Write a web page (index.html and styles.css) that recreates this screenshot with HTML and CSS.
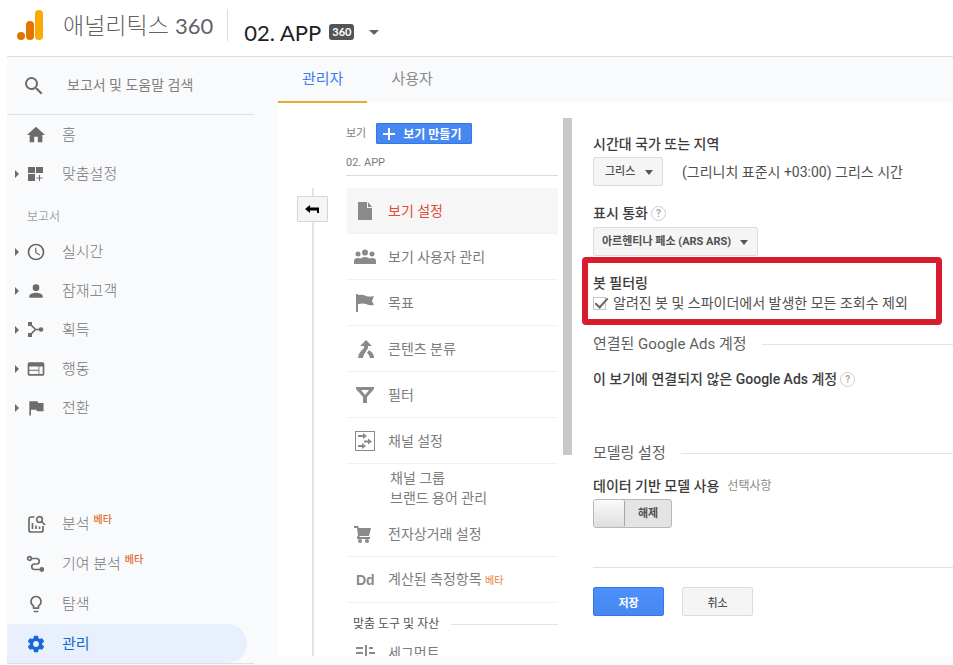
FILE: index.html
```html
<!DOCTYPE html>
<html lang="ko">
<head>
    <meta charset="UTF-8">
    <meta name="viewport" content="width=device-width, initial-scale=1.0">
    <title>애널리틱스 360</title>
    <link rel="stylesheet" href="styles.css">
</head>
<body>
    <header class="header">
      <svg class="logo" viewBox="0 0 26 30">
        <rect x="18" y="0" width="8" height="30" rx="4" fill="#f9ab00"/>
        <rect x="9" y="11" width="8" height="19" rx="4" fill="#e37400"/>
        <circle cx="4" cy="26" r="4" fill="#e37400"/>
      </svg>
      <h1 class="brand">애널리틱스 <span>360</span></h1>
      <button class="account" type="button">
        02. APP
        <span class="badge">360</span>
        <svg class="account-caret" viewBox="0 0 10 5"><path d="M0 0h10L5 5z"/></svg>
      </button>
    </header>

    <div class="page">
      <nav class="sidebar">
        <label class="search">
          <svg viewBox="0 0 24 24"><path d="M15.5 14h-.79l-.28-.27A6.47 6.47 0 0 0 16 9.500 6.500 6.500 0 1 0 9.500 16c1.610 0 3.090-.59 4.230-1.570l.27.28v.79l5 4.990L20.490 19l-4.990-5zm-6 0a4.500 4.500 0 1 1 0-9 4.500 4.500 0 0 1 0 9z"/></svg>
          <input type="text" placeholder="보고서 및 도움말 검색">
        </label>

        <a class="nav-item" href="#">
          <span class="caret-none"></span>
          <svg class="nav-icon" viewBox="1 1 22 22"><path d="M10 20v-6h4v6h5v-8h3L12 3 2 12h3v8z"/></svg>
          홈
        </a>
        <a class="nav-item" href="#">
          <svg class="caret" viewBox="0 0 4 8"><path d="M0 0l4 4-4 4z"/></svg>
          <svg class="nav-icon" viewBox="0 0 20 20"><path d="M2 3h7v6H2zM10 3h7v6h-7zM2 10h7v7H2zM13 11h1v2.500h2.500v1H14V17h-1v-2.500h-2.500v-1H13z"/></svg>
          맞춤설정
        </a>

        <h2 class="nav-title">보고서</h2>
        <a class="nav-item" href="#">
          <svg class="caret" viewBox="0 0 4 8"><path d="M0 0l4 4-4 4z"/></svg>
          <svg class="nav-icon" viewBox="0 0 24 24"><path d="M12 2a10 10 0 1 0 0 20 10 10 0 0 0 0-20zm0 18a8 8 0 1 1 0-16 8 8 0 0 1 0 16zm.5-13H11v6l5.200 3.200.8-1.300-4.500-2.700z"/></svg>
          실시간
        </a>
        <a class="nav-item" href="#">
          <svg class="caret" viewBox="0 0 4 8"><path d="M0 0l4 4-4 4z"/></svg>
          <svg class="nav-icon" viewBox="0 0 24 24"><path d="M12 12a4 4 0 1 0 0-8 4 4 0 0 0 0 8zm0 2c-2.700 0-8 1.300-8 4v2h16v-2c0-2.700-5.300-4-8-4z"/></svg>
          잠재고객
        </a>
        <a class="nav-item" href="#">
          <svg class="caret" viewBox="0 0 4 8"><path d="M0 0l4 4-4 4z"/></svg>
          <svg class="nav-icon" viewBox="0 0 20 20"><path d="M2 2h4v4H2zM2 13h4v4H2z"/><circle cx="15" cy="9.500" r="2.300"/><path d="M4 4l5.500 5.500L4 15M9 9.500h5" class="stroke"/></svg>
          획득
        </a>
        <a class="nav-item" href="#">
          <svg class="caret" viewBox="0 0 4 8"><path d="M0 0l4 4-4 4z"/></svg>
          <svg class="nav-icon" viewBox="0 0 24 24"><path d="M20 4H4a2 2 0 0 0-2 2v12c0 1.100.9 2 2 2h16a2 2 0 0 0 2-2V6a2 2 0 0 0-2-2zM15 18H4v-4h11zm0-5H4V9h11zm5 5h-4V9h4z"/></svg>
          행동
        </a>
        <a class="nav-item" href="#">
          <svg class="caret" viewBox="0 0 4 8"><path d="M0 0l4 4-4 4z"/></svg>
          <svg class="nav-icon" viewBox="0 0 24 24"><path d="M14.400 6L14 4H4v17h2v-7h6.600l.4 2h8V6z"/></svg>
          전환
        </a>

        <div class="nav-bottom">
          <a class="nav-item" href="#">
            <span class="caret-none"></span>
            <svg class="nav-icon" viewBox="0 0 20 20"><path class="stroke" d="M8.500 3H5Q3 3 3 5v11q0 2 2 2h10q2 0 2-2v-4M6.500 9v6M10 11.500V15M13.500 12.500V15M15.500 7.500L19 11"/><circle class="stroke" cx="13.500" cy="5.500" r="2.800"/></svg>
            <span>분석<sup>베타</sup></span>
          </a>
          <a class="nav-item" href="#">
            <span class="caret-none"></span>
            <svg class="nav-icon" viewBox="0 0 20 20"><path class="stroke" d="M5 4.500h5.500a2.700 2.700 0 0 1 0 5.500h-2a2.700 2.700 0 0 0 0 5.500H16"/><circle class="stroke" cx="3.500" cy="4.500" r="1.800"/><circle cx="15.800" cy="15.500" r="2.400"/></svg>
            <span>기여 분석<sup>베타</sup></span>
          </a>
          <a class="nav-item" href="#">
            <span class="caret-none"></span>
            <svg class="nav-icon" viewBox="0 0 24 24"><path d="M9 21c0 .55.45 1 1 1h4c.55 0 1-.45 1-1v-1H9zm3-19a7 7 0 0 0-4 12.740V17c0 .55.45 1 1 1h6c.55 0 1-.45 1-1v-2.260A7 7 0 0 0 12 2zm2.850 11.100l-.85.6V16h-4v-2.300l-.85-.6A5 5 0 1 1 17 9a5 5 0 0 1-2.150 4.100z"/></svg>
            탐색
          </a>
          <a class="nav-item active" href="#">
            <span class="caret-none"></span>
            <svg class="nav-icon" viewBox="0 0 24 24"><path d="M19.430 12.980c.04-.32.07-.64.07-.98s-.03-.66-.07-.98l2.110-1.650c.19-.15.24-.42.12-.64l-2-3.460c-.12-.22-.39-.3-.61-.22l-2.490 1c-.52-.4-1.080-.73-1.690-.98l-.38-2.650A.49.49 0 0 0 14 2h-4c-.25 0-.46.18-.49.42l-.38 2.650c-.61.25-1.170.59-1.690.98l-2.490-1c-.23-.09-.49 0-.61.22l-2 3.460c-.13.22-.07.49.12.64l2.110 1.650c-.04.32-.07.65-.07.98s.03.66.07.98l-2.110 1.650c-.19.15-.24.42-.12.64l2 3.460c.12.22.39.3.61.22l2.490-1c.52.4 1.080.73 1.690.98l.38 2.650c.03.24.24.42.49.42h4c.25 0 .46-.18.49-.42l.38-2.650c.61-.25 1.170-.59 1.690-.98l2.490 1c.23.09.49 0 .61-.22l2-3.460c.12-.22.07-.49-.12-.64zM12 15.500a3.500 3.500 0 1 1 0-7 3.500 3.500 0 0 1 0 7z"/></svg>
            관리
          </a>
        </div>
      </nav>

      <main class="main">
        <div class="tabs">
          <a class="tab selected" href="#">관리자</a>
          <a class="tab" href="#">사용자</a>
        </div>

        <div class="panel">
          <div class="rail">
            <button class="back" type="button" aria-label="뒤로">
              <svg viewBox="0 0 16 12"><path d="M0 6l5-4v2.500h9V10h-2V7.500H5V10z"/></svg>
            </button>
          </div>

          <div class="menu">
            <div class="menu-head">
              보기
              <button class="create" type="button">
                <svg viewBox="0 0 12 12"><path d="M5 0h2v5h5v2H7v5H5V7H0V5h5z"/></svg>
                보기 만들기
              </button>
            </div>
            <div class="view-name">02. APP</div>

            <a class="menu-item current" href="#">
              <svg viewBox="0 0 24 24"><path d="M5 3h9v6h5v12H5zM15 3l4 5h-4z"/></svg>
              보기 설정
            </a>
            <a class="menu-item" href="#">
              <svg viewBox="0 0 24 24"><circle cx="12" cy="7.500" r="3"/><circle cx="5" cy="9" r="2.500"/><circle cx="19" cy="9" r="2.500"/><path d="M1 19v-3q0-3 4-3 1.500 0 2.500.5Q9 12 12 12t4.500 1.500q1-.5 2.500-.5 4 0 4 3v3z"/></svg>
              보기 사용자 관리
            </a>
            <a class="menu-item" href="#">
              <svg viewBox="0 0 24 24"><path d="M3 3h2v1q5-1 8 1 3 1 8 0l-2 5 2 4q-5 1-8-1-3-1-8 0v8H3z"/></svg>
              목표
            </a>
            <a class="menu-item" href="#">
              <svg viewBox="0 0 24 24"><path d="M13 3l6 6h-4v2l-3 5q-2 2-2 5H5q0-4 3-7l3-3V9H7zM16 13q5 3 5 8h-4q0-3-3-5z"/></svg>
              콘텐츠 분류
            </a>
            <a class="menu-item" href="#">
              <svg viewBox="0 0 24 24"><path d="M3 4h18v2l-7 8v6h-4v-6L3 6zm5 3l4 5 4-5z"/></svg>
              필터
            </a>
            <a class="menu-item" href="#">
              <svg viewBox="0 0 24 24"><path d="M2 2h20v20H2zm1 1v18h18V3z" fill-rule="evenodd"/><path d="M5 6h5V4l4 3-4 3V8H5zM11 11.500h4v-2l4 3-4 3v-2h-4zM5 16h4v-2l4 3-4 3v-2H5z"/></svg>
              채널 설정
            </a>
            <div class="submenu">
              <a href="#">채널 그룹</a>
              <a href="#">브랜드 용어 관리</a>
            </div>
            <a class="menu-item" href="#">
              <svg viewBox="0 0 24 24"><path d="M1 4h4l1 2h12l-2 8H7l-1 1h11v2H4v-2l1-2L4 6H1z"/><circle cx="7" cy="19" r="2"/><circle cx="14" cy="19" r="2"/></svg>
              전자상거래 설정
            </a>
            <a class="menu-item" href="#">
              <span class="dd">Dd</span>
              <span>계산된 측정항목 <small>베타</small></span>
            </a>
            <h2 class="menu-title">맞춤 도구 및 자산</h2>
            <a class="menu-item short" href="#">
              <svg viewBox="0 0 24 24"><path d="M3 6h7v2H3zM3 11h7v2H3zM3 16h7v2H3zM12 4h2v16h-2zM16 6h4v2h-4zM16 11h6v2h-6zM16 16h6v2h-6z"/></svg>
              세그먼트
            </a>
          </div>

          <div class="scrollbar"></div>

          <form class="form">
            <label class="label" for="country">시간대 국가 또는 지역</label>
            <div class="row">
              <span class="select country">
                <select id="country"><option>그리스</option></select>
              </span>
              <span>(그리니치 표준시 +03:00) 그리스 시간</span>
            </div>

            <div class="label currency-label">
              <label for="currency">표시 통화</label>
              <button class="help" type="button">?</button>
            </div>
            <span class="select currency">
              <select id="currency"><option>아르헨티나 페소 (ARS ARS)</option></select>
            </span>

            <div class="highlight">
              <div class="label">봇 필터링</div>
              <label class="check">
                <input type="checkbox" checked>
                알려진 봇 및 스파이더에서 발생한 모든 조회수 제외
              </label>
            </div>

            <h2 class="section">연결된 Google Ads 계정</h2>
            <div class="label ads">
              이 보기에 연결되지 않은 Google Ads 계정
              <button class="help" type="button">?</button>
            </div>

            <h2 class="section modeling">모델링 설정</h2>
            <label class="label" for="model">데이터 기반 모델 사용 <span class="optional">선택사항</span></label>
            <label class="switch">
              <input id="model" type="checkbox">
              <span>해제</span>
            </label>

            <div class="actions">
              <button class="btn save" type="submit">저장</button>
              <button class="btn" type="button">취소</button>
            </div>
          </form>
        </div>
      </main>
    </div>
</body>
</html>
```
FILE: styles.css
```css
*{
  box-sizing: border-box;
}
body{
  margin: 0;
  padding-left: 7px;
  height: 100vh;
  display: flex;
  flex-direction: column;
  overflow: hidden;
  background-color: white;
  color: #505050;
  font-family: Roboto, "Noto Sans CJK KR", sans-serif;
  font-size: 14px;
  line-height: 20px;
}
a{
  color: inherit;
  text-decoration: none;
}
button, input, select{
  font-family: inherit;
  color: inherit;
}
button{
  cursor: pointer;
}
svg{
  flex: none;
  fill: currentColor;
}
.stroke{
  fill: none;
  stroke: currentColor;
  stroke-width: 1.7;
}
h1, h2{
  margin: 0;
  font-weight: 400;
}

/* header */
.header{
  display: flex;
  flex: none;
  height: 57px;
  padding-left: 10px;
  border-bottom: 1px solid #dcdcdc;
  font-family: Lato, "Noto Sans CJK KR", sans-serif;
}
.logo{
  width: 26px;
  height: 30px;
  margin-top: 10px;
}
.brand{
  height: 32px;
  margin-top: 9px;
  padding: 0 14px 0 20px;
  border-right: 1px solid #dadce0;
  color: #5f6368;
  font-size: 23px;
  line-height: 32px;
  font-weight: 300;
}
.brand span{
  font-size: 22px;
  font-weight: 400;
}
.account{
  display: flex;
  align-items: center;
  height: 32px;
  margin-top: 16px;
  padding: 0 16px;
  border: 0;
  background: none;
  color: #202124;
  font-size: 22px;
}
.badge{
  margin-left: 8px;
  padding: 0 3px;
  border-radius: 3px;
  background-color: #555;
  color: white;
  font-size: 11px;
  line-height: 16px;
  font-weight: 700;
}
.account-caret{
  width: 10px;
  height: 5px;
  margin-left: 15px;
  fill: #5f6368;
}

.page{
  display: flex;
  flex: 1;
  min-height: 0;
  background-color: #f9fafc;
}

/* sidebar */
.sidebar{
  display: flex;
  flex-direction: column;
  flex: none;
  width: 247px;
  margin-right: 24px;
  color: #757575;
}
.search{
  display: flex;
  align-items: center;
  height: 58px;
  padding-left: 15px;
  border-bottom: 1px solid #e0e0e0;
}
.search svg{
  width: 24px;
  height: 24px;
  fill: #6c6c6c;
}
.search input{
  width: 160px;
  margin-left: 21px;
  padding: 0 0 2px;
  border: 0;
  background: none;
  font-size: 14px;
}
.search input::placeholder{
  color: #808080;
}
.nav-item{
  display: flex;
  align-items: center;
  height: 39px;
  padding-left: 8px;
  font-size: 15px;
  font-weight: 300;
}
.caret, .caret-none{
  width: 4px;
  height: 8px;
  margin-right: 7px;
  fill: #6c6c6c;
}
.nav-icon{
  width: 20px;
  height: 20px;
  margin-right: 16px;
  color: #6c6c6c;
}
.nav-title{
  padding: 14px 20px 5px;
  font-size: 12px;
  font-weight: 300;
}
.nav-bottom{
  display: flex;
  flex-direction: column;
  gap: 1px;
  margin-top: auto;
  margin-bottom: 1px;
  border-bottom: 1px solid #e0e0e0;
}
.nav-item sup{
  margin-left: 4px;
  color: #e06c2c;
  font-size: 10px;
  line-height: 10px;
  font-weight: 500;
}
.nav-item.active{
  margin-right: 7px;
  border-radius: 0 20px 20px 0;
  background-color: #e8f0fe;
  color: #1967d2;
  font-weight: 400;
}
.active .nav-icon{
  color: #1967d2;
}

/* content */
.main{
  display: flex;
  flex-direction: column;
  flex: 1;
  min-width: 0;
  margin-bottom: 9px;
}
.tabs{
  display: flex;
  flex: none;
}
.tab{
  height: 46px;
  padding: 12px 24px 0;
  color: #8a8a8a;
  font-size: 15px;
}
.tab.selected{
  border-bottom: 2px solid #e8a92c;
  color: #3b7ded;
}
.panel{
  display: flex;
  flex: 1;
  min-height: 0;
  padding-left: 19px;
  overflow: hidden;
  background-color: white;
}
.rail{
  flex: none;
  width: 31px;
  margin: 85px 18px 0 0;
  padding-top: 8px;
  background: linear-gradient(#e4e4e4, #e4e4e4) center / 2px 100% no-repeat;
}
.back{
  display: flex;
  align-items: center;
  justify-content: center;
  width: 31px;
  height: 26px;
  padding: 0;
  border: 1px solid #d6d6d6;
  border-radius: 1px;
  background-color: #f5f5f5;
  color: black;
}
.back svg{
  width: 16px;
  height: 12px;
}

/* view menu */
.menu{
  flex: none;
  width: 212px;
  color: #7c7c7c;
}
.menu-head{
  display: flex;
  align-items: center;
  gap: 10px;
  margin-top: 20px;
  font-size: 11px;
}
.create{
  display: flex;
  align-items: center;
  gap: 8px;
  height: 21px;
  padding: 0 10px 0 6px;
  border: 1px solid #3079ed;
  border-radius: 1px;
  background-color: #4787f0;
  color: white;
  font-size: 12px;
  font-weight: 700;
}
.create svg{
  width: 12px;
  height: 12px;
}
.view-name{
  height: 32px;
  margin-bottom: 12px;
  padding-top: 9px;
  border-bottom: 1px solid #dcdcdc;
  font-size: 11px;
}
.menu-item{
  display: flex;
  align-items: center;
  height: 46px;
  margin-left: 1px;
  padding-left: 6px;
  border-bottom: 1px solid #f1f1f1;
}
.menu-item svg, .dd{
  width: 24px;
  height: 24px;
  margin-right: 11px;
  color: #8a8a8a;
}
.dd{
  padding-left: 3px;
  font-family: "Liberation Sans", sans-serif;
  font-weight: 700;
  line-height: 24px;
}
.menu-item small{
  color: #e8813a;
  font-size: 10px;
}
.menu-item.current{
  background-color: #f6f6f6;
  color: #dd4b39;
}
.submenu{
  display: flex;
  flex-direction: column;
  padding: 4px 0 3px 44px;
}
.menu-title{
  display: flex;
  align-items: center;
  gap: 12px;
  padding: 12px 0 0 7px;
  color: #555;
  font-size: 12px;
  line-height: 18px;
}
.menu-title::after, .section::after{
  content: "";
  flex: 1;
  border-top: 1px solid #e4e4e4;
}
.menu-item.short{
  height: 40px;
}
.scrollbar{
  flex: none;
  width: 9px;
  height: 337px;
  margin: 15px 21px 0 5px;
  background-color: #c8c8c8;
}

/* settings form */
.form{
  display: flex;
  flex-direction: column;
  align-items: flex-start;
  flex: 1;
  min-width: 0;
  padding-top: 31px;
}
.label{
  display: flex;
  align-items: center;
  color: #3c3c3c;
  font-weight: 500;
}
.row{
  display: flex;
  align-items: center;
  gap: 19px;
  margin-top: 3px;
}
.select{
  position: relative;
}
.select select{
  display: block;
  appearance: none;
  width: 100%;
  height: 29px;
  padding: 0 8px;
  border: 1px solid #dcdcdc;
  border-radius: 2px;
  background-color: #f5f5f5;
  font-size: 11px;
  font-weight: 500;
}
.select::after{
  content: "";
  position: absolute;
  top: 13px;
  right: 10px;
  border: 4px solid transparent;
  border-top: 5px solid #555;
  border-bottom: 0;
  pointer-events: none;
}
.country{
  width: 70px;
}
.country select{
  padding-left: 11px;
}
.currency{
  width: 165px;
}
.currency select{
  font-weight: 700;
}
.currency-label{
  margin: 17px 0 4px;
}
.help{
  width: 15px;
  height: 15px;
  margin-left: 3px;
  padding: 0;
  border: 1px solid #ccc;
  border-radius: 50%;
  background: none;
  color: #aaa;
  font-size: 10px;
  line-height: 13px;
  font-weight: 700;
}
.highlight{
  width: 360px;
  max-width: calc(100% + 11px);
  margin: 1px 0 0 -11px;
  padding: 10px 5px 6px;
  border: 6px solid #d81b2d;
  border-radius: 4px;
}
.check{
  display: flex;
  align-items: center;
  gap: 7px;
  white-space: nowrap;
}
.check input{
  appearance: none;
  position: relative;
  width: 13px;
  height: 13px;
  margin: 0;
  border: 1px solid #c6c6c6;
}
.check input:checked::after{
  content: "";
  position: absolute;
  top: -3px;
  left: 4px;
  width: 5px;
  height: 11px;
  border: solid #666;
  border-width: 0 2px 2px 0;
  transform: rotate(42deg);
}
.section{
  display: flex;
  align-items: center;
  align-self: stretch;
  gap: 15px;
  margin-top: 9px;
  color: #606060;
  font-size: 15px;
}
.ads{
  margin-top: 15px;
}
.modeling{
  margin: 54px 0 13px;
}
.optional{
  margin-left: 8px;
  color: #8a8a8a;
  font-size: 12px;
  font-weight: 400;
}
.switch{
  display: flex;
  width: 79px;
  height: 29px;
  margin-top: 3px;
  border: 1px solid #b8b8b8;
  border-radius: 3px;
  background-color: #e4e4e4;
  font-size: 11px;
  line-height: 27px;
  font-weight: 700;
}
.switch input{
  appearance: none;
  width: 31px;
  margin: 0;
  border-right: 1px solid #a6a6a6;
  border-radius: 2px;
  background: linear-gradient(#fbfbfb, #dedede);
}
.switch span{
  flex: 1;
  text-align: center;
}
.actions{
  display: flex;
  align-self: stretch;
  gap: 18px;
  margin-top: 39px;
  padding-top: 19px;
  border-top: 1px solid #e0e0e0;
}
.btn{
  width: 71px;
  height: 29px;
  padding: 0;
  border: 1px solid #dcdcdc;
  border-radius: 2px;
  background-color: #f5f5f5;
  font-size: 11px;
  font-weight: 500;
}
.btn.save{
  border-color: #3079ed;
  background: linear-gradient(#4d90fe, #4787ed);
  color: white;
  font-weight: 700;
}
```
